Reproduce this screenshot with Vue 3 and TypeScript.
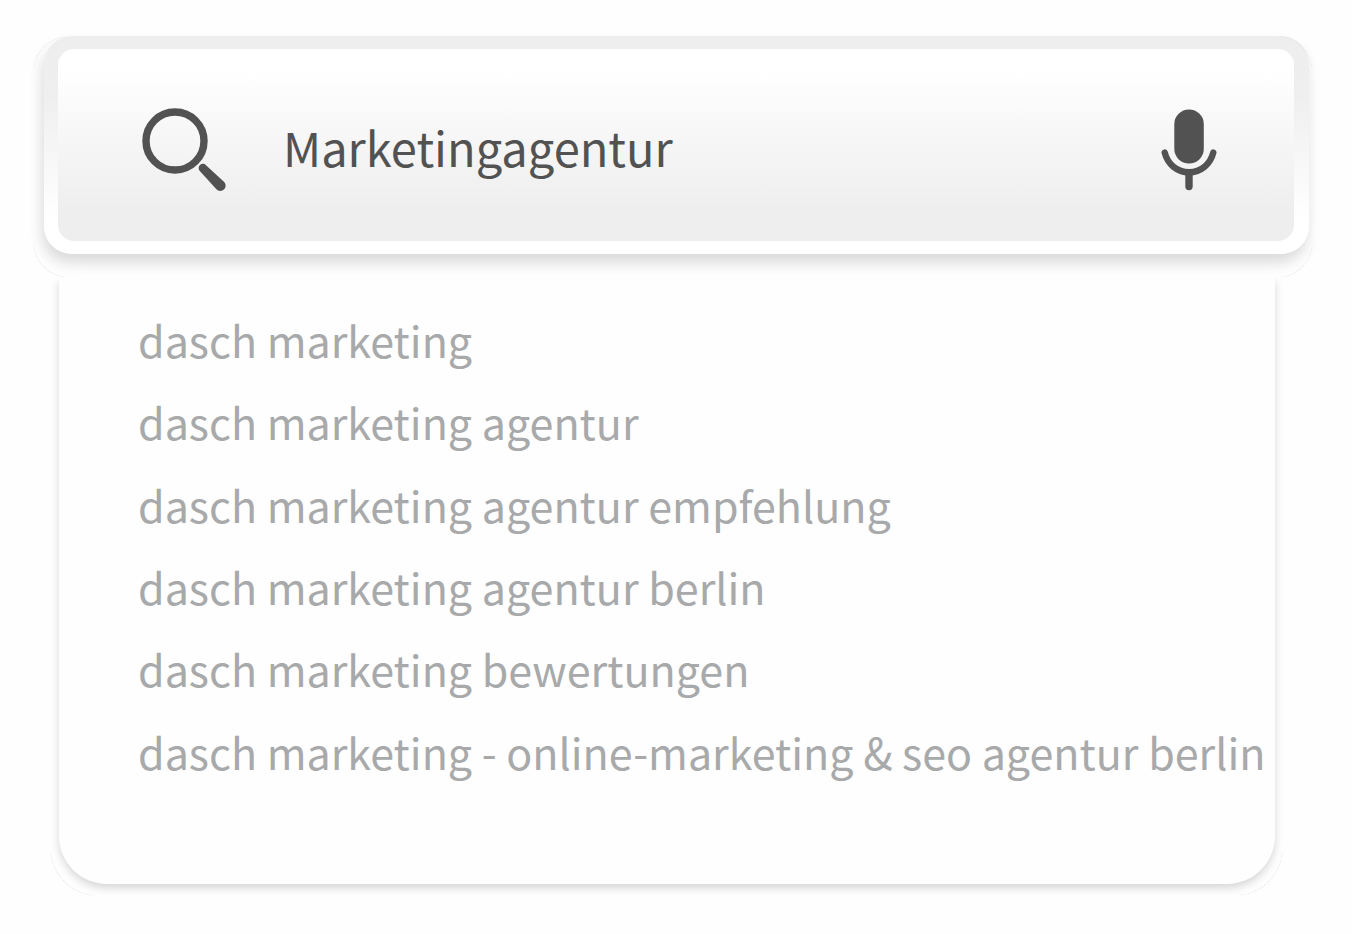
<script setup lang="ts">
import { ref } from 'vue'

const query = ref<string>('Marketingagentur')

const suggestions: string[] = [
  'dasch marketing',
  'dasch marketing agentur',
  'dasch marketing agentur empfehlung',
  'dasch marketing agentur berlin',
  'dasch marketing bewertungen',
  'dasch marketing - online-marketing & seo agentur berlin',
]
</script>

<template>
  <main class="search">
    <form class="frame" role="search" @submit.prevent>
      <div class="bar">
        <button class="icon-button" type="submit" aria-label="Suchen">
          <svg width="88" height="88" viewBox="0 0 88 88" aria-hidden="true">
            <circle cx="35" cy="35" r="29" fill="none" stroke="#525252" stroke-width="7.4" />
            <path
              d="M59.800 65L76.400 83.300A5.200 5.200 0 0 0 84.200 76L66 59.200A4.200 4.200 0 0 0 59.800 65Z"
              fill="#525252"
            />
          </svg>
        </button>
        <input v-model="query" class="query" type="text" aria-label="Suchbegriff" autocomplete="off" />
        <button class="icon-button" type="button" aria-label="Sprachsuche">
          <svg width="56" height="82" viewBox="0 0 56 82" aria-hidden="true">
            <rect x="13.300" y="0.500" width="29.500" height="54" rx="14.750" fill="#525252" />
            <path
              d="M3.700 43.500C6.500 55 16 63.200 28 63.200S49.500 55 52.300 43.500"
              fill="none"
              stroke="#525252"
              stroke-width="6.400"
              stroke-linecap="round"
            />
            <path d="M24.300 63H31.700V77.500A3.700 3.700 0 0 1 24.300 77.500Z" fill="#525252" />
          </svg>
        </button>
      </div>
    </form>

    <nav class="panel" aria-label="Suchvorschläge">
      <ul class="list">
        <li v-for="text in suggestions" :key="text" class="item">
          <a class="link" href="#">{{ text }}</a>
        </li>
      </ul>
    </nav>
  </main>
</template>

<style>
body {
  margin: 0;
  background: #fefefe;
}
</style>

<style scoped>
.search {
  box-sizing: border-box;
  padding: 36px 43px 50px 44px;
  font-family: 'Noto Sans CJK SC', 'Noto Sans', sans-serif;
}

.frame {
  position: relative;
  padding: 13px 15px 13px 14px;
  border-radius: 28px;
  background: linear-gradient(#eeeeee 0%, #efefef 28%, #ffffff 84%);
  box-shadow: -2px 9px 14px rgba(0, 0, 0, 0.14);
}

/* speckled outer edge of the shadow, shown at the corners only */
.frame::before,
.panel::before {
  content: '';
  position: absolute;
  border: 1px dotted #dddddd;
  pointer-events: none;
}

.frame::before {
  inset: 0 -4px -24px -11px;
  border-radius: 36px;
  mask:
    linear-gradient(#000 0 0) left top / 32px 32px no-repeat,
    linear-gradient(#000 0 0) right top / 32px 32px no-repeat,
    linear-gradient(#000 0 0) left bottom / 32px 32px no-repeat,
    linear-gradient(#000 0 0) right bottom / 32px 32px no-repeat;
}

.bar {
  display: flex;
  align-items: center;
  box-sizing: border-box;
  height: 192px;
  padding: 0 77px 0 82px;
  border-radius: 16px;
  background: linear-gradient(#ffffff 12%, #f9f9f9 35%, #eeeeee 84%);
}

.icon-button {
  display: flex;
  flex: none;
  padding: 10px 0 0;
  border: 0;
  background: none;
  cursor: pointer;
}

.query {
  flex: 1;
  min-width: 0;
  height: 72px;
  margin: 2px 24px 0 55px;
  padding: 0;
  border: 0;
  outline: 0;
  background: none;
  color: #525252;
  font-family: inherit;
  font-size: 47px;
}

.panel {
  position: relative;
  margin: 24px 34px 0 15px;
  padding: 20px 0 92px 79px;
  border-radius: 0 0 48px 48px;
  background: #fefefe;
  box-shadow: 0 4px 8px rgba(0, 0, 0, 0.16);
  clip-path: inset(0 -24px -24px -24px);
}

.panel::before {
  inset: 0 -8px -12px -9px;
  border-radius: 0 0 48px 48px;
  mask:
    linear-gradient(#000 0 0) left bottom / 44px 44px no-repeat,
    linear-gradient(#000 0 0) right bottom / 44px 44px no-repeat;
}

.list {
  display: grid;
  grid-auto-rows: 1fr;
  height: 494px;
  margin: 0;
  padding: 0;
  list-style: none;
}

.item {
  display: flex;
  align-items: center;
}

.link {
  color: #a8a9aa;
  font-size: 43px;
  line-height: 64px;
  text-decoration: none;
  white-space: nowrap;
}
</style>
